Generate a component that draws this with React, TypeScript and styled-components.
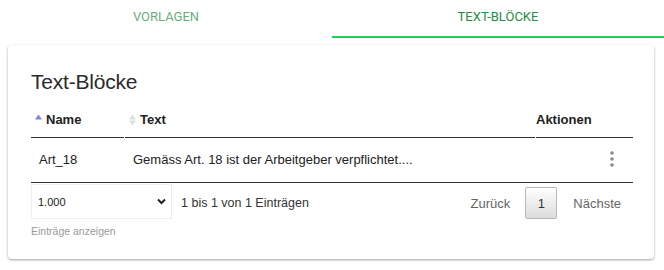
import React from "react";
import styled, { createGlobalStyle } from "styled-components";

const Global = createGlobalStyle`
  html, body { margin: 0; padding: 0; background: #fff; }
  body { font-family: "Liberation Sans", Arial, sans-serif; color: #222; }
  #root { width: 664px; }
`;

const Page = styled.div`
  width: 664px;
  height: 270px;
  background: #fff;
`;

const Tabs = styled.div`
  display: flex;
  height: 38px;
`;

const Tab = styled.div<{ $active?: boolean }>`
  flex: 1;
  display: flex;
  align-items: center;
  justify-content: center;
  box-sizing: border-box;
  padding-bottom: 3px;
  font-family: Roboto, "Liberation Sans", sans-serif;
  font-size: 13px;
  font-weight: 400;
  text-transform: uppercase;
  color: #2b8a45;
  opacity: ${(p) => (p.$active ? 1 : 0.7)};
  border-bottom: 2px solid ${(p) => (p.$active ? "#1fd05c" : "transparent")};
`;

const Card = styled.div`
  margin: 7px 10px 0 8px;
  height: 214px;
  box-sizing: border-box;
  padding: 25px 21px 0 23px;
  background: #fff;
  border-radius: 4px;
  box-shadow: 0 1px 3px rgba(0, 0, 0, 0.22), 0 1px 2px rgba(0, 0, 0, 0.18);
`;

const Title = styled.h2`
  margin: 0;
  font-size: 21px;
  line-height: 24px;
  font-weight: 400;
  color: #2a2a2a;
  letter-spacing: -0.2px;
`;

const HeadRow = styled.div`
  display: grid;
  grid-template-columns: 93px 410px 97px;
  column-gap: 1px;
`;

const HeadCell = styled.div<{ $pad?: number }>`
  display: flex;
  align-items: center;
  gap: 4px;
  padding: 18px 0 9px ${(p) => p.$pad ?? 4}px;
  font-size: 13px;
  line-height: 16px;
  font-weight: 700;
  color: #222;
  border-bottom: 1px solid #333;
`;

const BodyRow = styled.div`
  display: grid;
  grid-template-columns: 94px 410px 98px;
  border-bottom: 1px solid #333;
`;

const Cell = styled.div<{ $align?: string }>`
  padding: 13px ${(p) => (p.$align === "right" ? "19px" : "8px")} 14px 8px;
  font-size: 13px;
  line-height: 16px;
  color: #222;
  display: flex;
  align-items: center;
  justify-content: ${(p) => (p.$align === "right" ? "flex-end" : "flex-start")};
`;

const Footer = styled.div`
  display: flex;
  align-items: flex-start;
  padding-right: 12px;
`;

const LengthBox = styled.div`
  display: flex;
  flex-direction: column;
`;

const SelectWrap = styled.div`
  position: relative;
  width: 141px;
  height: 35px;
  margin-top: 1px;
`;

const Select = styled.select`
  appearance: none;
  -webkit-appearance: none;
  width: 100%;
  height: 100%;
  box-sizing: border-box;
  border: 1px solid #eee;
  border-radius: 0;
  background: #fff;
  padding: 0 0 0 6px;
  font-family: "Liberation Sans", Arial, sans-serif;
  font-size: 11px;
  color: #222;
  outline: none;
`;

const Chevron = styled.svg`
  position: absolute;
  right: 6px;
  top: 14px;
  pointer-events: none;
`;

const Caption = styled.div`
  margin-top: 6px;
  font-size: 10.5px;
  line-height: 12px;
  color: #9a9a9a;
`;

const Info = styled.div`
  margin: 12px 0 0 9px;
  font-size: 12.5px;
  line-height: 16px;
  color: #333;
`;

const Pager = styled.div`
  margin-left: auto;
  margin-top: 4px;
  display: flex;
  align-items: center;
  font-size: 13px;
  color: #666;
`;

const PageLink = styled.span``;

const PageButton = styled.button`
  width: 32px;
  height: 32px;
  margin: 0 16px 0 15px;
  box-sizing: border-box;
  border: 1px solid #b8b8b8;
  border-radius: 2px;
  background: linear-gradient(to bottom, #ffffff 0%, #dcdcdc 100%);
  font-family: "Liberation Sans", Arial, sans-serif;
  font-size: 13px;
  color: #333;
  padding: 0;
`;

const SortIcon = ({ active }: { active?: boolean }) => (
  <svg width="7" height="12" viewBox="0 0 7 12">
    <polygon points="0,5.5 3.5,0.5 7,5.5" fill={active ? "#7f86e6" : "#dedede"} />
    {!active && <polygon points="0,6.5 7,6.5 3.5,11.5" fill="#dedede" />}
  </svg>
);

const Dots = () => (
  <svg width="4" height="17" viewBox="0 0 4 17">
    <circle cx="2" cy="2" r="1.8" fill="#8a8a8a" />
    <circle cx="2" cy="8" r="1.8" fill="#8a8a8a" />
    <circle cx="2" cy="14" r="1.8" fill="#8a8a8a" />
  </svg>
);

export default function App() {
  return (
    <Page>
      <Global />
      <Tabs>
        <Tab>Vorlagen</Tab>
        <Tab $active>Text-Blöcke</Tab>
      </Tabs>
      <Card>
        <Title>Text-Blöcke</Title>
        <HeadRow>
          <HeadCell>
            <SortIcon active />
            Name
          </HeadCell>
          <HeadCell>
            <SortIcon />
            Text
          </HeadCell>
          <HeadCell $pad={0}>Aktionen</HeadCell>
        </HeadRow>
        <BodyRow>
          <Cell>Art_18</Cell>
          <Cell>Gemäss Art. 18 ist der Arbeitgeber verpflichtet....</Cell>
          <Cell $align="right">
            <Dots />
          </Cell>
        </BodyRow>
        <Footer>
          <LengthBox>
            <SelectWrap>
              <Select defaultValue="1000">
                <option value="10">10</option>
                <option value="100">100</option>
                <option value="1000">1.000</option>
              </Select>
              <Chevron width="9" height="7" viewBox="0 0 9 7">
                <polyline points="1,1.5 4.5,5 8,1.5" fill="none" stroke="#222" strokeWidth="2" />
              </Chevron>
            </SelectWrap>
            <Caption>Einträge anzeigen</Caption>
          </LengthBox>
          <Info>1 bis 1 von 1 Einträgen</Info>
          <Pager>
            <PageLink>Zurück</PageLink>
            <PageButton>1</PageButton>
            <PageLink>Nächste</PageLink>
          </Pager>
        </Footer>
      </Card>
    </Page>
  );
}
